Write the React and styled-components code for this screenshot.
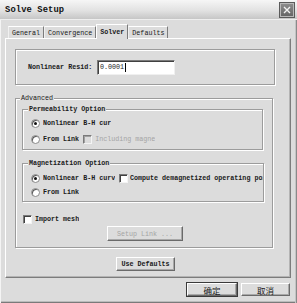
import React from 'react';
import styled, { createGlobalStyle } from 'styled-components';

const Global = createGlobalStyle`
  html, body { margin: 0; padding: 0; background: #dcdcdc; }
  body {
    width: 297px; height: 303px; overflow: hidden;
    font-family: "Liberation Mono", "DejaVu Sans Mono", monospace;
    font-size: 6.7px; color: #1a1a1a;
  }
  * { box-sizing: border-box; }
`;

const Window = styled.div`
  width: 297px; height: 303px;
  background: #dcdcdc;
  display: flex; flex-direction: column;
  box-shadow: inset 1px 0 #f4f4f4, inset -1px 0 #8a8a8a, inset -2px 0 #c4c4c4, inset 0 -1px #7a7a7a, inset 0 -2px #bcbcbc;
`;

const TitleBar = styled.div`
  height: 20px;
  display: flex; align-items: center; justify-content: space-between;
  padding: 0 3px 0 5px;
  background: linear-gradient(#f6f6f6, #e2e2e2 55%, #c6c6c6);
  border-bottom: 1px solid #eeeeee;
`;

const Title = styled.span`
  font-size: 8.8px; font-weight: 700; color: #111;
  letter-spacing: 0.1px;
`;

const CloseBtn = styled.div`
  width: 14px; height: 14px;
  background: linear-gradient(#8c8c8c, #666);
  border: 1px solid #b8b8b8;
  outline: 1px solid #5a5a5a;
  display: flex; align-items: center; justify-content: center;
`;

const TabRow = styled.div`
  display: flex; align-items: flex-end;
  height: 18px;
  padding-left: 8px;
  position: relative; z-index: 1;
`;

const Tab = styled.div`
  height: ${p => (p.$active ? 15 : 12)}px;
  margin-bottom: ${p => (p.$active ? -1 : 0)}px;
  padding: 0 3px;
  display: flex; align-items: center;
  background: #dcdcdc;
  border-top: 1px solid #fff;
  border-left: 1px solid ${p => (p.$active ? '#fff' : '#f0f0f0')};
  border-right: 1px solid #7c7c7c;
  font-weight: ${p => (p.$active ? 700 : 400)};
`;

const Panel = styled.div`
  margin: 0 6px 0 5px;
  height: 240px;
  border-top: 1px solid #fff;
  border-left: 1px solid #fff;
  border-right: 1px solid #7c7c7c;
  border-bottom: 1px solid #7c7c7c;
  box-shadow: inset -1px -1px 0 #b4b4b4;
  padding: 10px 0 0 9px;
  display: flex; flex-direction: column; align-items: flex-start;
`;

const Etched = styled.div`
  position: relative;
  width: ${p => p.$w}px;
  height: ${p => p.$h}px;
  margin-top: ${p => p.$mt || 0}px;
  border: 1px solid #9c9c9c;
  box-shadow: inset 1px 1px 0 #fff, 1px 1px 0 #fff;
  display: flex; flex-direction: column; align-items: flex-start;
  padding: ${p => p.$pad || '0'};
`;

const Legend = styled.span`
  position: absolute; top: -5px; left: ${p => p.$left || 4}px;
  background: #dcdcdc; padding: 0 1px;
  line-height: 8px;
`;

const ResidualRow = styled.div`
  display: flex; align-items: center;
  padding-left: 12px; height: 100%;
`;

const FieldLabel = styled.span`
  width: 69px; font-weight: 700;
`;

const Input = styled.div`
  width: 78px; height: 15px;
  background: #fff;
  border-top: 1px solid #7a7a7a;
  border-left: 1px solid #7a7a7a;
  border-right: 1px solid #f0f0f0;
  border-bottom: 1px solid #f0f0f0;
  box-shadow: inset 1px 1px 0 #404040;
  display: flex; align-items: center; padding-left: 2px;
`;

const Caret = styled.span`
  display: inline-block; width: 1px; height: 9px; background: #000; margin-left: 0.5px;
`;

const OptRow = styled.div`
  display: flex; align-items: center;
  height: 12px;
  margin-top: ${p => p.$mt || 0}px;
  white-space: nowrap;
`;

const Radio = styled.span`
  width: 9px; height: 9px; border-radius: 50%;
  background: #fff;
  border: 1px solid #8a8a8a;
  box-shadow: inset 1px 1px 0 #5a5a5a;
  display: inline-flex; align-items: center; justify-content: center;
  margin-right: 3px;
  &::after {
    content: '';
    width: 3px; height: 3px; border-radius: 50%;
    background: ${p => (p.$on ? '#111' : 'transparent')};
  }
`;

const Check = styled.span`
  width: 9px; height: 9px;
  background: ${p => (p.$disabled ? '#dcdcdc' : '#fff')};
  border-top: 1px solid #7a7a7a;
  border-left: 1px solid #7a7a7a;
  border-right: 1px solid #f4f4f4;
  border-bottom: 1px solid #f4f4f4;
  box-shadow: inset 1px 1px 0 ${p => (p.$disabled ? '#a0a0a0' : '#404040')};
  margin: 0 ${p => p.$mr || 3}px 0 ${p => p.$ml || 0}px;
  display: inline-block;
`;

const Text = styled.span`
  color: ${p => (p.$disabled ? '#a4a4a4' : '#1a1a1a')};
  font-weight: ${p => (p.$bold ? 700 : 400)};
  width: ${p => (p.$w ? `${p.$w}px` : 'auto')};
  overflow: hidden;
`;

const Button = styled.div`
  width: ${p => p.$w}px; height: ${p => p.$h}px;
  margin: ${p => p.$m || '0'};
  display: flex; align-items: center; justify-content: center;
  background: #dcdcdc;
  border-top: 1px solid #fff;
  border-left: 1px solid #fff;
  border-right: 1px solid #6a6a6a;
  border-bottom: 1px solid #6a6a6a;
  box-shadow: inset -1px -1px 0 #a8a8a8${p => (p.$default ? ', 0 0 0 1px #3a3a3a' : '')};
  color: ${p => (p.$disabled ? '#a4a4a4' : '#1a1a1a')};
  font-weight: ${p => (p.$bold ? 700 : 400)};
  font-family: ${p => (p.$cjk ? '"Noto Sans CJK SC", sans-serif' : 'inherit')};
  font-size: ${p => (p.$cjk ? '8.5px' : 'inherit')};
`;

const Footer = styled.div`
  display: flex; justify-content: flex-end; gap: 4px;
  padding: 5px 7px 0 0;
`;

export default function App() {
  return (
    <>
      <Global />
      <Window>
        <TitleBar>
          <Title>Solve Setup</Title>
          <CloseBtn>
            <svg width="8" height="8" viewBox="0 0 8 8">
              <path d="M1 1L7 7M7 1L1 7" stroke="#f2f2f2" strokeWidth="1.4" />
            </svg>
          </CloseBtn>
        </TitleBar>
        <TabRow>
          <Tab>General</Tab>
          <Tab>Convergence</Tab>
          <Tab $active>Solver</Tab>
          <Tab>Defaults</Tab>
        </TabRow>
        <Panel>
          <Etched $w={260} $h={36}>
            <ResidualRow>
              <FieldLabel>Nonlinear Resid:</FieldLabel>
              <Input>0.0001<Caret /></Input>
            </ResidualRow>
          </Etched>
          <Etched $w={258} $h={150} $mt={13} $pad="10px 0 0 6px">
            <Legend>Advanced</Legend>
            <Etched $w={241} $h={41} $pad="7px 0 0 8px">
              <Legend $left={5}><Text $bold>Permeability Option</Text></Legend>
              <OptRow><Radio $on /><Text $bold>Nonlinear B-H cur</Text></OptRow>
              <OptRow $mt={4}>
                <Radio /><Text $bold>From Link</Text>
                <Check $disabled $ml={4} $mr={3} />
                <Text $disabled>Including magne</Text>
              </OptRow>
            </Etched>
            <Etched $w={242} $h={39} $mt={13} $pad="8px 0 0 8px">
              <Legend $left={5}><Text $bold>Magnetization Option</Text></Legend>
              <OptRow>
                <Radio $on /><Text $bold $w={72}>Nonlinear B-H curve</Text>
                <Check $ml={4} $mr={2} />
                <Text $bold $w={133}>Compute demagnetized operating point</Text>
              </OptRow>
              <OptRow $mt={2}><Radio /><Text $bold>From Link</Text></OptRow>
            </Etched>
            <OptRow $mt={11}>
              <Check $ml={1} $mr={3} /><Text $bold>Import mesh</Text>
            </OptRow>
            <Button $w={76} $h={15} $m="1px 0 0 85px" $disabled>Setup Link ...</Button>
          </Etched>
          <Button $w={59} $h={14} $m="9px 0 0 101px" $bold>Use Defaults</Button>
        </Panel>
        <Footer>
          <Button $w={50} $h={13} $default $cjk>确定</Button>
          <Button $w={49} $h={13} $cjk>取消</Button>
        </Footer>
      </Window>
    </>
  );
}
